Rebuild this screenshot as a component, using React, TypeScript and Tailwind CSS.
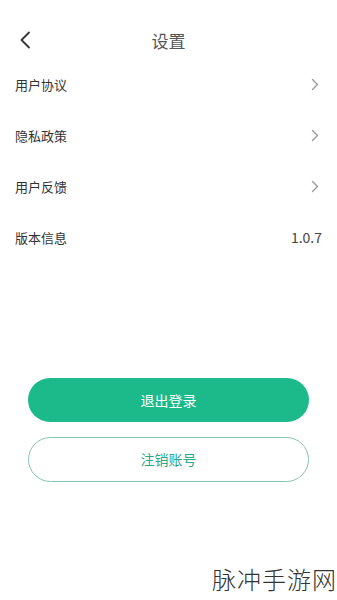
import React from "react";

const font = { fontFamily: '"Noto Sans CJK SC", "Noto Sans", sans-serif' };

function Chevron() {
  return (
    <svg width="8" height="13" viewBox="0 0 8 13" fill="none">
      <path d="M1.5 1.5L6.5 6.5L1.5 11.5" stroke="#9a9a9a" strokeWidth="1.4" strokeLinecap="round" strokeLinejoin="round" />
    </svg>
  );
}

function Row({ label, right }: { label: string; right?: string }) {
  return (
    <div className="flex h-[51px] items-center justify-between pl-[15px] pr-[18px]">
      <span className="text-[13px] text-[#333]">{label}</span>
      {right ? <span className="text-[14px] text-[#444] -mr-[3px]">{right}</span> : <Chevron />}
    </div>
  );
}

export default function App() {
  return (
    <div className="relative h-[600px] w-[337px] bg-white" style={font}>
      <div className="relative flex h-[59px] items-center justify-center pt-[22px]">
        <div className="absolute left-[19px] top-[31px]">
          <svg width="12" height="18" viewBox="0 0 12 18" fill="none">
            <path d="M10 1.5L2.5 9L10 16.5" stroke="#333" strokeWidth="1.8" strokeLinecap="round" strokeLinejoin="round" />
          </svg>
        </div>
        <span className="text-[17px] text-[#555]">设置</span>
      </div>
      <div>
        <Row label="用户协议" />
        <Row label="隐私政策" />
        <Row label="用户反馈" />
        <Row label="版本信息" right="1.0.7" />
      </div>
      <div className="mt-[115px] flex flex-col items-center gap-[15px]">
        <button className="flex h-[44px] w-[281px] items-center justify-center rounded-full bg-[#1cb98a] text-[14px] text-white">
          退出登录
        </button>
        <button className="flex h-[45px] w-[281px] items-center justify-center rounded-full border border-[#86c4b4] bg-white text-[14px] text-[#2aa888]">
          注销账号
        </button>
      </div>
      <div className="absolute right-0 top-[561px] text-[24px] font-light text-[#333] tracking-[1px]">脉冲手游网</div>
    </div>
  );
}
